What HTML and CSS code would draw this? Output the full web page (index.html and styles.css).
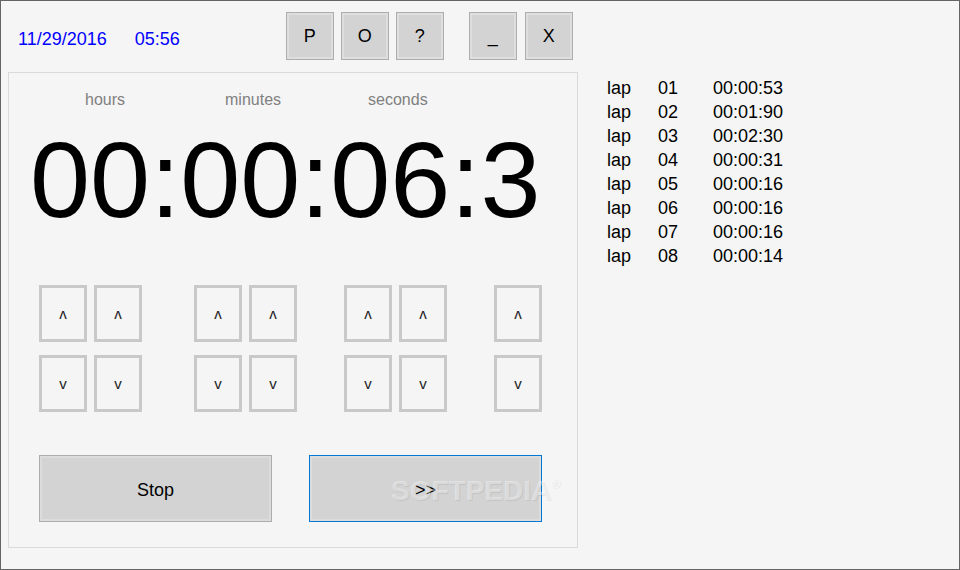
FILE: index.html
```html
<!DOCTYPE html>
<html lang="en">

<head>
  <meta charset="UTF-8" />
  <meta name="viewport" content="width=device-width, initial-scale=1.0" />
  <title>Stopwatch</title>
  <link rel="stylesheet" href="styles.css">
</head>

<body>
  <div class="window">
    <div class="main">
      <div class="top-bar">
        <span class="date">11/29/2016</span>
        <span class="clock">05:56</span>
        <div class="sys-group">
          <button class="sys-btn">P</button>
          <button class="sys-btn">O</button>
          <button class="sys-btn">?</button>
        </div>
        <div class="sys-group win-group">
          <button class="sys-btn">_</button>
          <button class="sys-btn">X</button>
        </div>
      </div>

      <div class="panel">
        <div class="labels">
          <span class="lbl-hours">hours</span>
          <span class="lbl-minutes">minutes</span>
          <span>seconds</span>
        </div>

        <div class="time">00:00:06:3</div>

        <!-- up / down per digit -->
        <div class="arrows">
          <div class="arrow-group group-hours">
            <button class="arrow">ʌ</button>
            <button class="arrow">ʌ</button>
            <button class="arrow">v</button>
            <button class="arrow">v</button>
          </div>
          <div class="arrow-group">
            <button class="arrow">ʌ</button>
            <button class="arrow">ʌ</button>
            <button class="arrow">v</button>
            <button class="arrow">v</button>
          </div>
          <div class="arrow-group">
            <button class="arrow">ʌ</button>
            <button class="arrow">ʌ</button>
            <button class="arrow">v</button>
            <button class="arrow">v</button>
          </div>
          <div class="arrow-group single">
            <button class="arrow">ʌ</button>
            <button class="arrow">v</button>
          </div>
        </div>

        <div class="actions">
          <button class="big-btn">Stop</button>
          <div class="next-frame">
            <button class="big-btn big-btn-next">&gt;&gt;</button>
          </div>
        </div>
      </div>
    </div>

    <ul class="laps">
      <li><span>lap</span><span>01</span><span>00:00:53</span></li>
      <li><span>lap</span><span>02</span><span>00:01:90</span></li>
      <li><span>lap</span><span>03</span><span>00:02:30</span></li>
      <li><span>lap</span><span>04</span><span>00:00:31</span></li>
      <li><span>lap</span><span>05</span><span>00:00:16</span></li>
      <li><span>lap</span><span>06</span><span>00:00:16</span></li>
      <li><span>lap</span><span>07</span><span>00:00:16</span></li>
      <li><span>lap</span><span>08</span><span>00:00:14</span></li>
    </ul>

    <div class="watermark">SOFTPEDIA<sup>®</sup></div>
  </div>
</body>

</html>
```

FILE: styles.css
```css
* {
  margin: 0;
  padding: 0;
  box-sizing: border-box;
}

body {
  font-family: "Liberation Sans", Arial, sans-serif;
  background: #f5f5f5;
}

.window {
  position: relative;
  width: 960px;
  height: 570px;
  border: 1px solid #646464;
  background: #f5f5f5;
  display: flex;
  align-items: flex-start;
}

.main {
  width: 577px;
}

/* top bar */
.top-bar {
  height: 71px;
  padding: 11px 0 0 17px;
  display: flex;
  align-items: flex-start;
}

.date,
.clock {
  font-size: 18px;
  line-height: 20px;
  color: #0000ff;
  margin-top: 17px;
}

.clock {
  margin-left: 28px;
}

.sys-group {
  display: flex;
  gap: 7px;
  margin-left: 106px;
}

.win-group {
  gap: 8px;
  margin-left: 25px;
}

.sys-btn {
  width: 48px;
  height: 48px;
  border: 1px solid #adadad;
  box-shadow: inset 0 0 0 2px #dedede;
  background: #d3d3d3;
  font-family: "Liberation Sans", Arial, sans-serif;
  font-size: 18px;
  color: #000;
}

/* main panel */
.panel {
  margin-left: 7px;
  width: 570px;
  height: 476px;
  border: 1px solid #dadada;
}

.labels {
  display: flex;
  padding: 18px 0 0 76px;
  font-size: 16px;
  line-height: 18px;
  color: #808080;
}

.lbl-hours {
  margin-right: 100px;
}

.lbl-minutes {
  margin-right: 87px;
}

.time {
  margin-top: 17px;
  padding-left: 21px;
  font-size: 108px;
  line-height: 108px;
  color: #000;
  white-space: nowrap;
}

.arrows {
  display: flex;
  gap: 47px;
  margin-top: 51px;
  padding-left: 30px;
}

.arrow-group {
  display: grid;
  grid-template-columns: repeat(2, 48px);
  grid-template-rows: 57px 57px;
  gap: 13px 7px;
}

.group-hours {
  margin-right: 5px;
}

.arrow-group.single {
  grid-template-columns: 48px;
}

.arrow {
  border: 3px solid #c9c9c9;
  background: #f5f5f5;
  font-family: "Liberation Sans", "DejaVu Sans", sans-serif;
  font-size: 15px;
  color: #222;
}

.actions {
  display: flex;
  gap: 37px;
  margin-top: 43px;
  padding-left: 30px;
}

.big-btn {
  width: 233px;
  height: 67px;
  border: 1px solid #adadad;
  box-shadow: inset 0 0 0 2px #dcdcdc;
  background: #d3d3d3;
  font-family: "Liberation Sans", Arial, sans-serif;
  font-size: 18px;
  line-height: 20px;
  padding-top: 2px;
  color: #000;
}

/* focused button: blue frame */
.next-frame {
  width: 233px;
  height: 67px;
  padding: 1px;
  background: #0078d7;
}

.big-btn-next {
  display: block;
  width: 231px;
  height: 65px;
  border: 2px solid #dcdcdc;
  box-shadow: none;
}

/* lap list */
.laps {
  list-style: none;
  margin: 75px 0 0 29px;
  font-size: 18px;
  line-height: 24px;
  color: #000;
}

.laps li {
  display: grid;
  grid-template-columns: 51px 55px auto;
}

.watermark {
  position: absolute;
  left: 390px;
  top: 469px;
  font-size: 28px;
  font-weight: bold;
  line-height: 28px;
  color: rgba(255, 255, 255, 0.4);
  text-shadow: 1px 1px 1px rgba(0, 0, 0, 0.07);
  pointer-events: none;
}

.watermark sup {
  font-size: 12px;
  vertical-align: 12px;
}
```
